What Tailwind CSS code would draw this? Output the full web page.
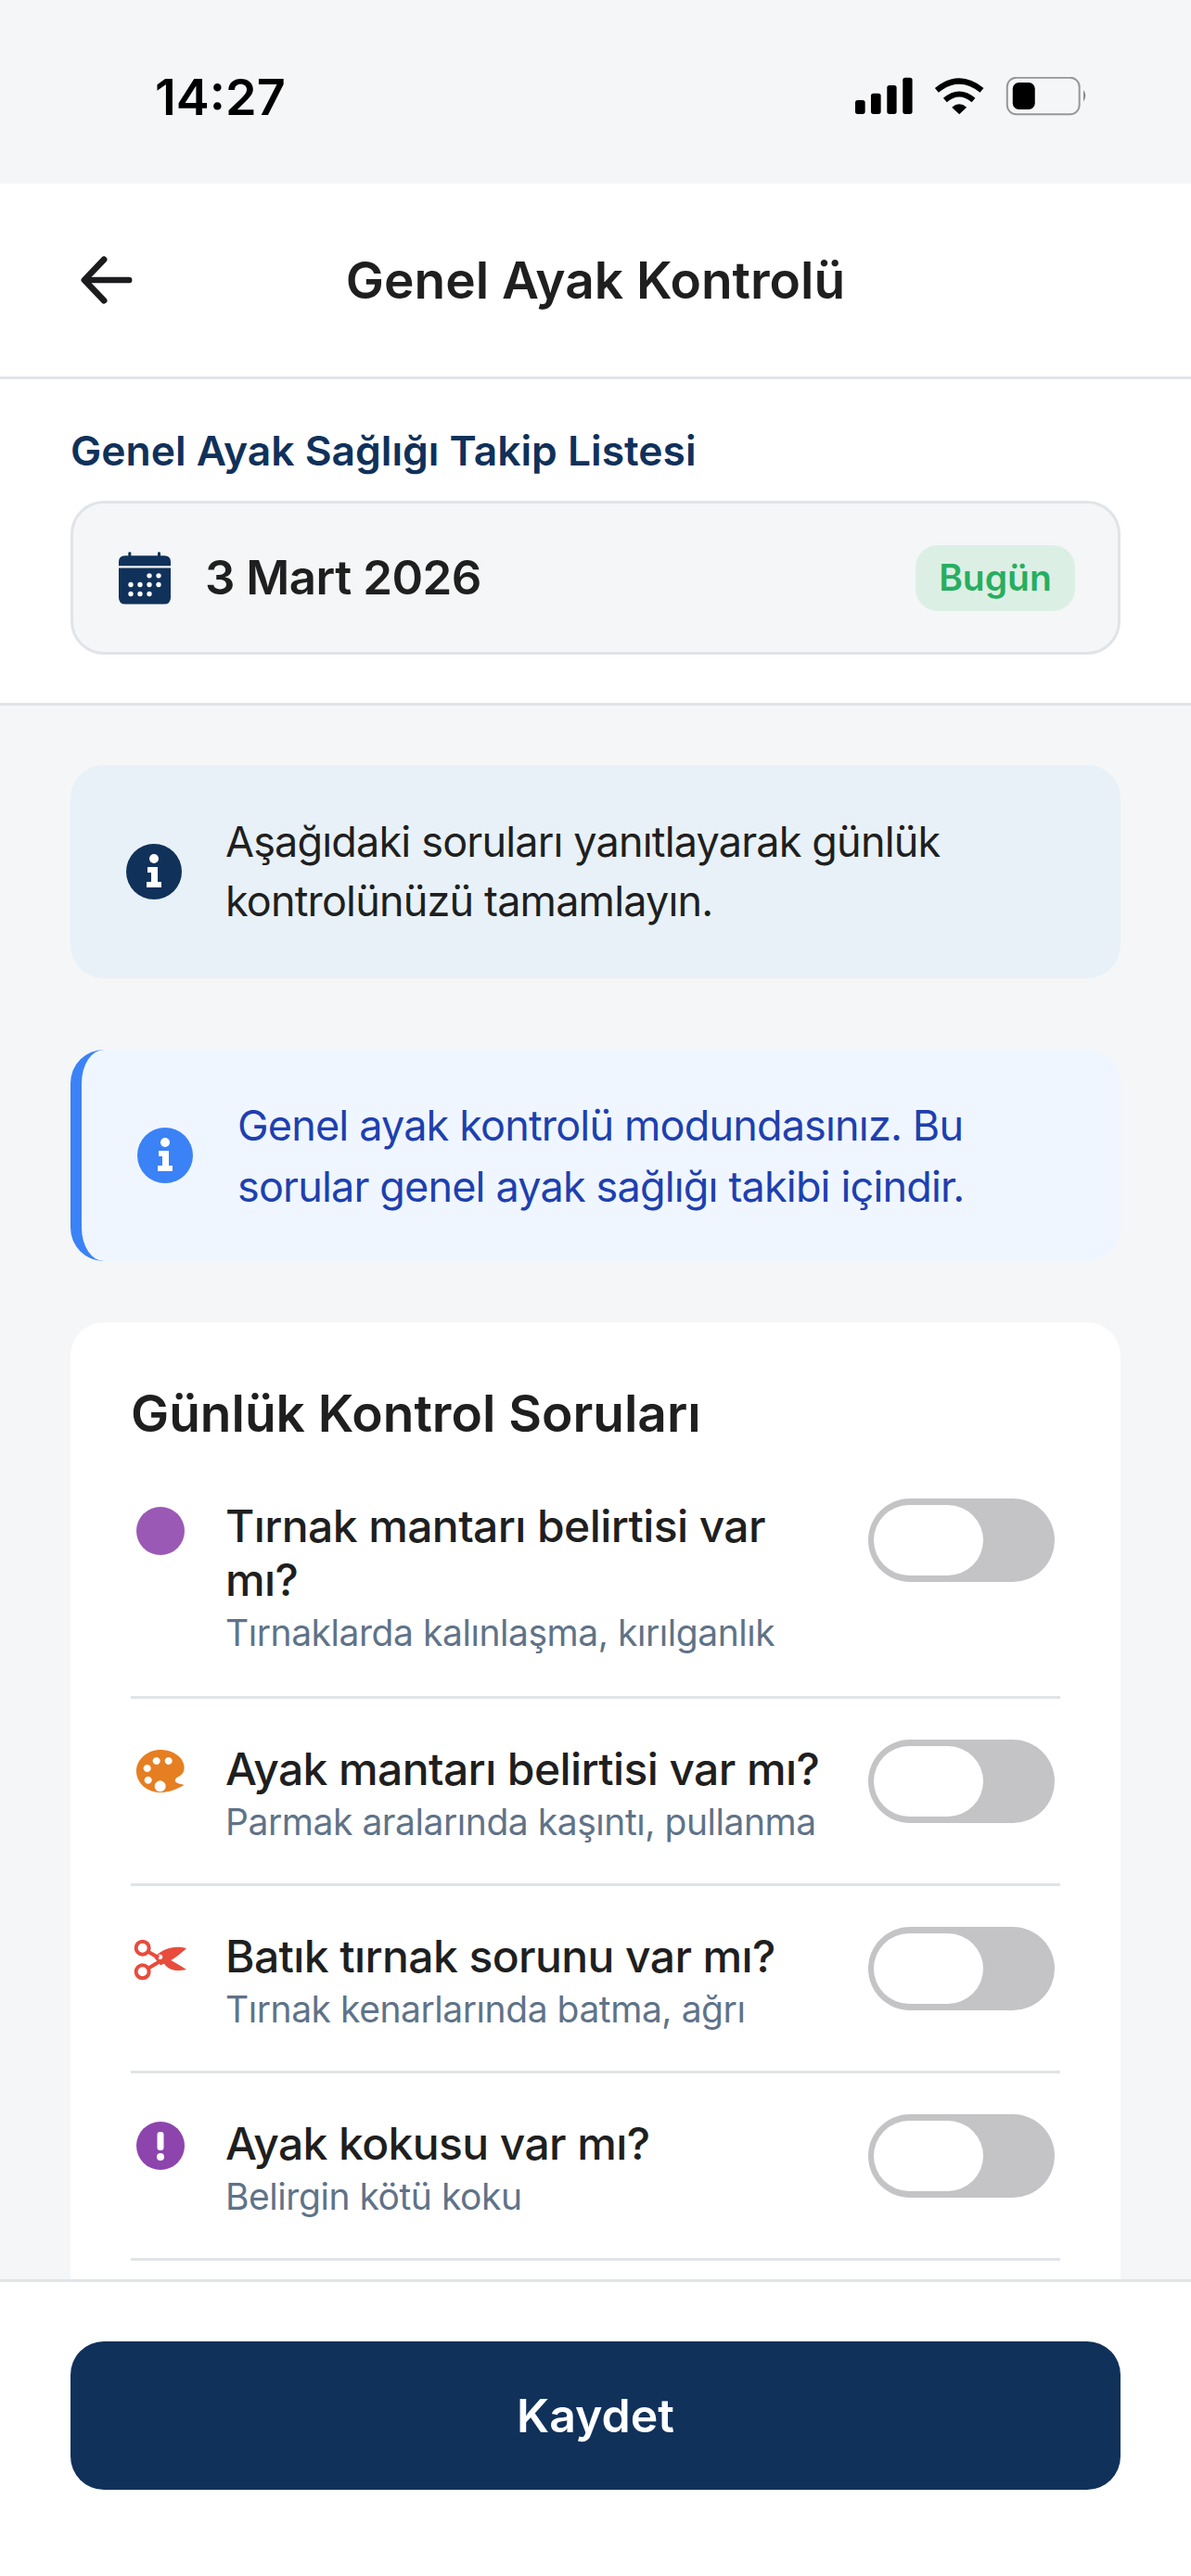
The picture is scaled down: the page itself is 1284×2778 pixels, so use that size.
<!DOCTYPE html>
<html lang="tr">
<head>
<meta charset="utf-8">
<script src="https://cdn.jsdelivr.net/npm/@tailwindcss/browser@4"></script>
</head>
<body class="m-0">
<div class="w-[1284px] h-[2778px] flex flex-col overflow-hidden bg-[#f4f6f8] font-['Inter',sans-serif] text-[#1c1c1e]">

  <div class="h-[198px] shrink-0 flex items-start justify-between pt-[72px] pl-[167px] pr-[110px]">
    <span class="text-[54px] leading-[66px] font-semibold text-black">14:27</span>
    <svg class="mt-[11px]" width="253" height="42" viewBox="120 100 760 126" fill="none">
      <g fill="#000">
        <rect x="123" y="175" width="32" height="45" rx="8"/>
        <rect x="174" y="153" width="32" height="67" rx="8"/>
        <rect x="226" y="127" width="31" height="93" rx="8"/>
        <rect x="277" y="102" width="31" height="118" rx="8"/>
        <path d="M436 198 Q460 178 484 198 L460 221 Z"/>
      </g>
      <path d="M387 143 Q460 84 533 143" stroke="#000" stroke-width="19"/>
      <path d="M414 175 Q460 136 506 175" stroke="#000" stroke-width="18"/>
      <rect x="615" y="102" width="234" height="119" rx="30" stroke="#979797" stroke-width="6"/>
      <rect x="633" y="118" width="72" height="87" rx="20" fill="#000"/>
      <path d="M862 142 Q876 160 862 180 Z" fill="#8a8a8a"/>
    </svg>
  </div>

  <div class="h-[211px] shrink-0 bg-white border-b-[3px] border-[#e0e4e8] flex items-center justify-between pl-[87px] pr-[87px]">
    <svg width="56" height="52" viewBox="0 0 58 54" fill="none" stroke="#1c1c1e" stroke-width="7" stroke-linecap="round" stroke-linejoin="round">
      <path d="M5 27 H54"/>
      <path d="M26 4 L4 27 L26 50"/>
    </svg>
    <span class="text-[55px] leading-[66px] font-semibold text-[#1f1f1f]">Genel Ayak Kontrolü</span>
    <div class="w-[56px]"></div>
  </div>

  <div class="shrink-0 bg-white border-b-[3px] border-[#e0e4e8] pt-[52px] pb-[52px] px-[76px]">
    <div class="text-[44.4px] leading-[51px] font-semibold text-[#10315a] mb-[28px]">Genel Ayak Sağlığı Takip Listesi</div>
    <div class="h-[166px] bg-[#f4f6f8] border-[3px] border-[#e0e4e8] rounded-[36px] flex items-center pl-[49px] pr-[46px]">
      <svg width="56" height="57" viewBox="85 103 168 170" class="shrink-0">
        <g fill="#10315a">
          <rect x="116" y="103" width="9" height="20" rx="4"/>
          <rect x="211" y="103" width="9" height="20" rx="4"/>
          <path d="M105 115 H233 Q253 115 253 135 V148 H85 V135 Q85 115 105 115 Z"/>
          <path d="M85 155 H253 V250 Q253 272 231 272 H107 Q85 272 85 250 Z"/>
        </g>
        <g fill="#fff">
          <circle cx="184" cy="180" r="8"/><circle cx="214" cy="180" r="8"/>
          <circle cx="124" cy="209" r="8"/><circle cx="154" cy="209" r="8"/><circle cx="184" cy="209" r="8"/><circle cx="214" cy="209" r="8"/>
          <circle cx="124" cy="239" r="8"/><circle cx="154" cy="239" r="8"/><circle cx="184" cy="239" r="8"/>
        </g>
      </svg>
      <span class="ml-[37px] text-[51px] leading-[66px] font-semibold tracking-[-0.5px] text-[#1f1f1f]">3 Mart 2026</span>
      <span class="ml-auto h-[71px] w-[172px] rounded-[24px] bg-[#dcefe5] flex items-center justify-center text-[39px] font-semibold text-[#27ae60]">Bugün</span>
    </div>
  </div>

  <div class="flex-1 min-h-0 overflow-hidden pt-[64px] px-[76px]">
    <div class="h-[230px] rounded-[36px] bg-[#e8f1f7] flex items-center pl-[60px] pr-[60px] gap-[47px]">
      <svg width="60" height="60" viewBox="0 0 60 60" class="shrink-0">
        <circle cx="30" cy="30" r="30" fill="#10315a"/>
        <circle cx="30" cy="16" r="5" fill="#fff"/>
        <path d="M23 25 H34 V41 H38 V47 H22 V41 H27 V31 H23 Z" fill="#fff"/>
      </svg>
      <p class="text-[45px] leading-[64px] tracking-[-0.84px] text-[#1f1f1f]">Aşağıdaki soruları yanıtlayarak günlük kontrolünüzü tamamlayın.</p>
    </div>

    <div class="mt-[77px] h-[228px] rounded-[36px] bg-[#eff6ff] border-l-[12px] border-[#3b82f6] flex items-center pl-[60px] pr-[60px] gap-[48px]">
      <svg width="60" height="60" viewBox="0 0 60 60" class="shrink-0">
        <circle cx="30" cy="30" r="30" fill="#3b82f6"/>
        <circle cx="30" cy="16" r="5" fill="#fff"/>
        <path d="M23 25 H34 V41 H38 V47 H22 V41 H27 V31 H23 Z" fill="#fff"/>
      </svg>
      <p class="pt-[2px] text-[45px] leading-[66px] tracking-[-0.84px] text-[#1e40af]">Genel ayak kontrolü modundasınız. Bu sorular genel ayak sağlığı takibi içindir.</p>
    </div>

    <div class="mt-[66px] bg-white rounded-t-[36px] pt-[68px] px-[65px]">
      <h2 class="text-[55px] leading-[60px] font-semibold text-[#1f1f1f] mb-[18px]">Günlük Kontrol Soruları</h2>

      <div class="flex items-start py-[45px] border-b-[3px] border-[#e0e4e8]">
        <div class="w-[102px] shrink-0 pl-[6px] pt-[8px]">
          <div class="w-[52px] h-[52px] rounded-full bg-[#9b59b6]"></div>
        </div>
        <div class="w-[650px]">
          <div class="text-[48px] leading-[58px] font-medium tracking-[-0.6px] text-[#1f1f1f]">Tırnak mantarı belirtisi var mı?</div>
          <div class="mt-[4px] text-[39px] leading-[47px] tracking-[-0.45px] text-[#5f7388]">Tırnaklarda kalınlaşma, kırılganlık</div>
        </div>
        <div class="ml-auto mr-[6px] -mt-[1px] w-[201px] h-[90px] shrink-0 rounded-full bg-[#c4c4c6] p-[7px] pl-[6px]">
          <div class="w-[118px] h-[76px] rounded-full bg-white"></div>
        </div>
      </div>

      <div class="flex items-start pt-[47px] pb-[43px] border-b-[3px] border-[#e0e4e8]">
        <div class="w-[102px] shrink-0 pl-[6px] pt-[5px]">
          <svg width="52" height="52" viewBox="50 72 156 138">
            <path fill-rule="evenodd" fill="#e67e22" d="M128 72 C86 72 50 103 50 141 C50 180 85 210 128 210 C150 210 172 204 205 186 C190 182 172 180 176 168 C180 158 205 158 205 130 C205 98 170 72 128 72 Z M115 96 a12 12 0 1 0 0.01 0 Z M154 96 a12 12 0 1 0 0.01 0 Z M85 120 a12 12 0 1 0 0.01 0 Z M88 158 a12 12 0 1 0 0.01 0 Z M127 172 a18 18 0 1 0 0.01 0 Z"/>
          </svg>
        </div>
        <div class="w-[680px]">
          <div class="text-[48px] leading-[58px] font-medium tracking-[-0.6px] text-[#1f1f1f]">Ayak mantarı belirtisi var mı?</div>
          <div class="mt-[4px] text-[39px] leading-[47px] tracking-[-0.45px] text-[#5f7388]">Parmak aralarında kaşıntı, pullanma</div>
        </div>
        <div class="ml-auto mr-[6px] -mt-[3px] w-[201px] h-[90px] shrink-0 rounded-full bg-[#c4c4c6] p-[7px] pl-[6px]">
          <div class="w-[118px] h-[76px] rounded-full bg-white"></div>
        </div>
      </div>

      <div class="flex items-start pt-[47px] pb-[43px] border-b-[3px] border-[#e0e4e8]">
        <div class="w-[102px] shrink-0 pl-[3px] pt-[9px]">
          <svg width="58" height="46" viewBox="42 88 172 138">
            <g fill="none" stroke="#e74c3c" stroke-width="12">
              <circle cx="70" cy="120" r="21"/>
              <circle cx="70" cy="197" r="21"/>
              <path d="M88 132 L122 152 M88 186 L122 166"/>
            </g>
            <path fill-rule="evenodd" fill="#e74c3c" d="M108 152 C125 128 170 108 212 122 C190 142 160 165 128 176 Z M127 141 a8 8 0 1 0 0.01 0 Z"/>
            <path fill="#e74c3c" d="M138 168 L156 156 C176 168 196 178 212 190 C182 198 152 192 138 168 Z"/>
          </svg>
        </div>
        <div class="w-[680px]">
          <div class="text-[48px] leading-[58px] font-medium tracking-[-0.6px] text-[#1f1f1f]">Batık tırnak sorunu var mı?</div>
          <div class="mt-[4px] text-[39px] leading-[47px] tracking-[-0.45px] text-[#5f7388]">Tırnak kenarlarında batma, ağrı</div>
        </div>
        <div class="ml-auto mr-[6px] -mt-[3px] w-[201px] h-[90px] shrink-0 rounded-full bg-[#c4c4c6] p-[7px] pl-[6px]">
          <div class="w-[118px] h-[76px] rounded-full bg-white"></div>
        </div>
      </div>

      <div class="flex items-start pt-[47px] pb-[43px] border-b-[3px] border-[#e0e4e8]">
        <div class="w-[102px] shrink-0 pl-[6px] pt-[5px]">
          <svg width="52" height="52" viewBox="0 0 52 52">
            <circle cx="26" cy="26" r="26" fill="#8e44ad"/>
            <rect x="22.5" y="11" width="7" height="20" rx="3" fill="#fff"/>
            <circle cx="26" cy="38" r="4" fill="#fff"/>
          </svg>
        </div>
        <div class="w-[680px]">
          <div class="text-[48px] leading-[58px] font-medium tracking-[-0.6px] text-[#1f1f1f]">Ayak kokusu var mı?</div>
          <div class="mt-[4px] text-[39px] leading-[47px] tracking-[-0.45px] text-[#5f7388]">Belirgin kötü koku</div>
        </div>
        <div class="ml-auto mr-[6px] -mt-[3px] w-[201px] h-[90px] shrink-0 rounded-full bg-[#c4c4c6] p-[7px] pl-[6px]">
          <div class="w-[118px] h-[76px] rounded-full bg-white"></div>
        </div>
      </div>
      <div class="h-[200px]"></div>
    </div>
  </div>

  <div class="h-[320px] shrink-0 bg-white border-t-[3px] border-[#e0e4e8] pt-[64px] px-[76px]">
    <button class="w-full h-[160px] rounded-[36px] bg-[#10315a] text-white text-[50px] font-semibold">Kaydet</button>
  </div>
</div>
</body>
</html>
